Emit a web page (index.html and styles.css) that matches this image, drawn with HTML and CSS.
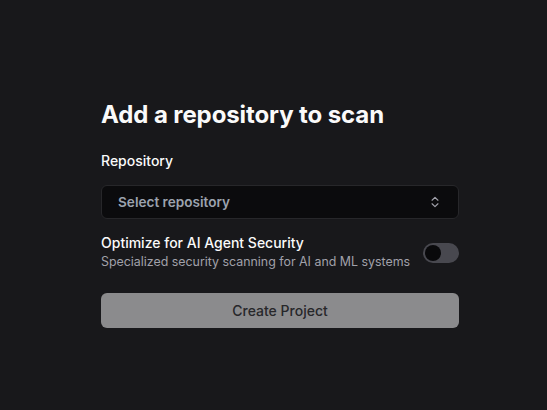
FILE: index.html
```html
<!DOCTYPE html>
<html>
<head>
<meta charset="utf-8">
<link rel="stylesheet" href="styles.css">
</head>
<body>
<main class="page">
  <section class="card">
    <h1 class="title">Add a repository to scan</h1>
    <label class="label">Repository</label>
    <button class="select" type="button">
      <span class="select-text">Select repository</span>
      <svg class="chev" width="14" height="14" viewBox="0 0 24 24" fill="none" stroke="currentColor" stroke-width="2" stroke-linecap="round" stroke-linejoin="round"><path d="m7 15 5 5 5-5"/><path d="m7 9 5-5 5 5"/></svg>
    </button>
    <div class="option">
      <div class="option-text">
        <div class="option-title">Optimize for AI Agent Security</div>
        <div class="option-desc">Specialized security scanning for AI and ML systems</div>
      </div>
      <span class="switch"><span class="knob"></span></span>
    </div>
    <button class="create" type="button">Create Project</button>
  </section>
</main>
</body>
</html>
```
FILE: styles.css
```css
* { box-sizing: border-box; }
html, body { margin: 0; height: 100%; }
body {
  background: #18181b;
  font-family: Inter, "Noto Sans", sans-serif;
  color: #fafafa;
}
.page {
  padding: 100px 88px 0 101px;
}
.card {
  width: 358px;
  display: flex;
  flex-direction: column;
}
.title {
  margin: 0;
  font-size: 24px;
  font-weight: 700;
  line-height: 30px;
  letter-spacing: -0.1px;
}
.label {
  margin-top: 22px;
  font-size: 14px;
  font-weight: 500;
  line-height: 18px;
}
.select {
  margin-top: 15px;
  height: 34px;
  width: 100%;
  background: #0b0b0d;
  border: 1px solid #27272a;
  border-radius: 6px;
  display: flex;
  align-items: center;
  justify-content: space-between;
  padding: 0 16px 0 16px;
  font-family: inherit;
  color: #a1a1aa;
}
.select-text {
  font-size: 13.6px;
  font-weight: 600;
  color: #9ca3af;
}
.chev { color: #a1a1aa; }
.option {
  margin-top: 15px;
  display: flex;
  align-items: center;
  justify-content: space-between;
}
.option-title {
  font-size: 14px;
  font-weight: 500;
  line-height: 18px;
  color: #fafafa;
}
.option-desc {
  font-size: 12.4px;
  line-height: 20px;
  color: #a1a1aa;
}
.switch {
  width: 36px;
  height: 20px;
  border-radius: 10px;
  background: #48484f;
  padding: 2px;
  display: flex;
}
.knob {
  width: 16px;
  height: 16px;
  border-radius: 50%;
  background: #09090b;
}
.create {
  margin-top: 21px;
  height: 35px;
  width: 100%;
  border: 0;
  border-radius: 6px;
  background: #8b8b8d;
  color: #27272a;
  font-family: inherit;
  font-size: 14px;
  font-weight: 500;
}
```
